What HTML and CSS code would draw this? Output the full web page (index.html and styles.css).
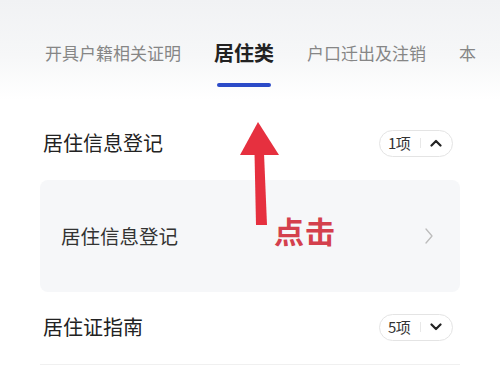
FILE: index.html
```html
<!DOCTYPE html>
<html lang="zh-CN">
<head>
<meta charset="utf-8">
<link rel="stylesheet" href="styles.css">
</head>
<body>
<div class="page">
  <nav class="tabs">
    <div class="tab">开具户籍相关证明</div>
    <div class="tab active">居住类<span class="bar"></span></div>
    <div class="tab">户口迁出及注销</div>
    <div class="tab">本</div>
  </nav>
  <main class="content">
    <div class="sec-head">
      <span class="sec-title">居住信息登记</span>
      <span class="pill"><span class="cnt">1项</span><span class="sep"></span>
        <svg class="chev" viewBox="0 0 12 8" width="12" height="8"><path d="M1.5 6.5 L6 2 L10.5 6.5" fill="none" stroke="#222" stroke-width="2.2" stroke-linecap="round" stroke-linejoin="round"/></svg>
      </span>
    </div>
    <div class="card">
      <span class="card-title">居住信息登记</span>
      <svg class="arrow-r" viewBox="0 0 8 16" width="8" height="16"><path d="M1 1 L7 8 L1 15" fill="none" stroke="#bcbcbc" stroke-width="1.3" stroke-linecap="round" stroke-linejoin="round"/></svg>
    </div>
    <div class="sec-head">
      <span class="sec-title">居住证指南</span>
      <span class="pill"><span class="cnt">5项</span><span class="sep"></span>
        <svg class="chev" viewBox="0 0 12 8" width="12" height="8"><path d="M1.5 1.5 L6 6 L10.5 1.5" fill="none" stroke="#222" stroke-width="2.2" stroke-linecap="round" stroke-linejoin="round"/></svg>
      </span>
    </div>
    <div class="divider"></div>
  </main>
  <svg class="annot" viewBox="0 0 500 375" width="500" height="375">
    <polygon points="258,122 240,155 279,155" fill="#e6303f"/>
    <polygon points="254.5,153 264,153 267,225 256,225" fill="#e6303f"/>
  </svg>
  <div class="click">点击</div>
</div>
</body>
</html>
```
FILE: styles.css
```css
html, body {
  margin: 0;
  padding: 0;
  background: #fff;
  overflow: hidden;
}
body {
  font-family: "Noto Sans CJK SC", "Noto Sans", sans-serif;
  width: 500px;
  height: 375px;
}
.page {
  position: relative;
  width: 500px;
  height: 375px;
  overflow: hidden;
}
.tabs {
  height: 100px;
  box-sizing: border-box;
  padding: 41px 0 0 45px;
  display: flex;
  align-items: flex-start;
  gap: 33px;
  white-space: nowrap;
  overflow: hidden;
  background: linear-gradient(#f1f2f4 0%, #f6f7f8 55%, #fff 100%);
}
.tab {
  font-size: 17px;
  line-height: 24px;
  color: #868686;
  display: flex;
  flex-direction: column;
  align-items: center;
  flex-shrink: 0;
}
.tab.active {
  font-size: 20px;
  font-weight: 700;
  color: #222;
}
.bar {
  display: block;
  width: 54px;
  height: 4px;
  border-radius: 2px;
  background: #2c4bc8;
  margin-top: 18px;
}
.content {
  padding: 16px 40px 0 40px;
}
.sec-head {
  height: 54px;
  display: flex;
  align-items: center;
  justify-content: space-between;
  padding: 0 7px 0 3px;
}
.sec-title {
  font-size: 20px;
  color: #222;
  line-height: 28px;
}
.pill {
  height: 27px;
  width: 74px;
  box-sizing: border-box;
  border: 1px solid #e4e4e4;
  border-radius: 14px;
  display: flex;
  align-items: center;
  padding-left: 8px;
  background: #fff;
}
.cnt {
  font-size: 15px;
  color: #333;
  line-height: 20px;
  letter-spacing: -0.5px;
}
.sep {
  width: 1px;
  height: 10px;
  background: #e8e8e8;
  margin: 0 9px 0 10px;
}
.chev {
  display: block;
}
.card {
  margin: 10px 0 8px;
  height: 112px;
  box-sizing: border-box;
  background: #f6f7f9;
  border-radius: 8px;
  display: flex;
  align-items: center;
  justify-content: space-between;
  padding: 0 27px 0 21px;
}
.card-title {
  font-size: 19.5px;
  color: #333;
  line-height: 28px;
}
.arrow-r {
  display: block;
}
.divider {
  margin-top: 10px;
  height: 1px;
  background: #f0f0f0;
}
.annot {
  position: absolute;
  left: 0;
  top: 0;
  pointer-events: none;
}
.click {
  position: absolute;
  left: 274px;
  top: 213px;
  font-size: 30px;
  line-height: 34px;
  font-weight: 700;
  color: #d4404d;
  letter-spacing: 1px;
}
```
